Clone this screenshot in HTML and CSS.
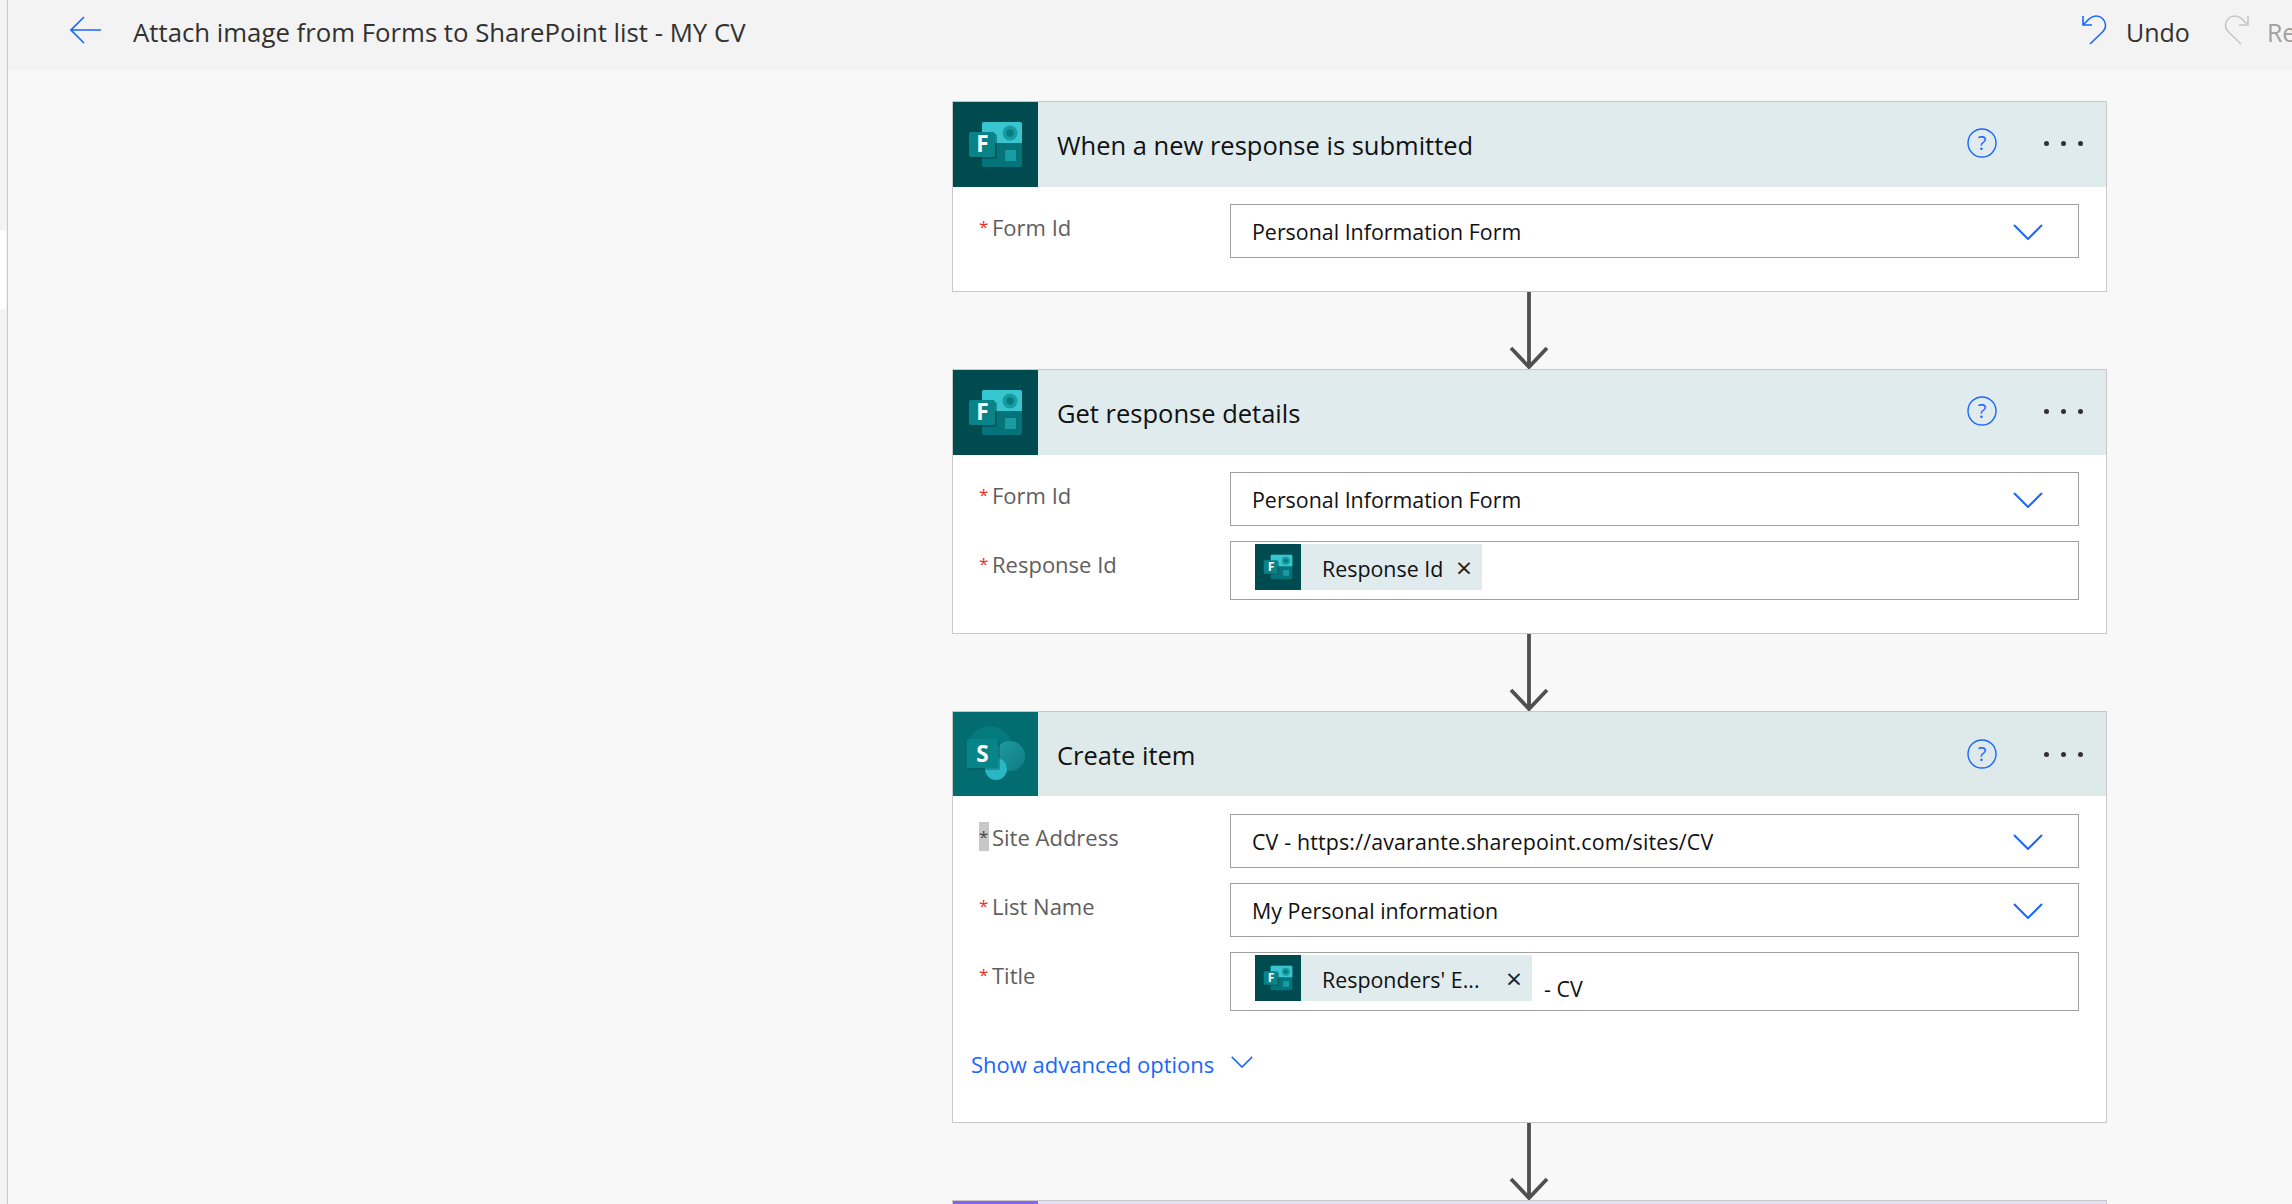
FILE: index.html
```html
<!DOCTYPE html>
<html lang="en">
<head>
<meta charset="utf-8">
<title>Attach image from Forms to SharePoint list - MY CV</title>
<link rel="stylesheet" href="styles.css">
</head>
<body>
<svg class="defs" width="0" height="0" aria-hidden="true">
  <defs>
    <linearGradient id="sp-right" x1="0" y1="0" x2="1" y2="1">
      <stop offset="0" stop-color="#1f9ca2"/>
      <stop offset="1" stop-color="#0f7b81"/>
    </linearGradient>
    <symbol id="forms" viewBox="0 0 85 85">
      <rect x="29" y="20" width="40" height="45" rx="2" fill="#05747a"/>
      <path d="M31 20H67a2 2 0 0 1 2 2V41H29V22a2 2 0 0 1 2-2z" fill="#37c6d0"/>
      <circle cx="57" cy="31" r="7.5" fill="#1a9ba1"/>
      <circle cx="57" cy="31" r="3.7" fill="#037c80"/>
      <rect x="52" y="48" width="11" height="11" fill="#1a9ba1"/>
      <rect x="18" y="32" width="26" height="25" rx="2" fill="#003f44" opacity="0.45"/>
      <rect x="16" y="30" width="26" height="25" rx="2" fill="#088387"/>
      <text x="29.5" y="50" text-anchor="middle" class="logo-letter">F</text>
    </symbol>
    <symbol id="sharepoint" viewBox="0 0 85 84">
      <circle cx="37" cy="36" r="22" fill="#047a7e"/>
      <circle cx="57" cy="44" r="15" fill="url(#sp-right)"/>
      <circle cx="43" cy="57" r="11" fill="#2ab7c3"/>
      <rect x="16" y="29" width="31" height="29" rx="2" fill="#024d50" opacity="0.4"/>
      <rect x="14" y="27" width="31" height="29" rx="2" fill="#068488"/>
      <text x="29.5" y="50" text-anchor="middle" class="logo-letter">S</text>
    </symbol>
    <symbol id="chev" viewBox="0 0 30 16">
      <path d="M1 1L15 15L29 1" fill="none" stroke="currentColor" stroke-width="2"/>
    </symbol>
    <symbol id="help" viewBox="0 0 30 30">
      <circle cx="15" cy="15" r="14" fill="none" stroke="currentColor" stroke-width="1.4"/>
      <text x="15" y="22" text-anchor="middle" class="help-mark">?</text>
    </symbol>
    <symbol id="arrow" viewBox="0 0 40 77">
      <path d="M20 0V75M2 56L20 75L38 56" fill="none" stroke="#505050" stroke-width="3.8"/>
    </symbol>
    <symbol id="undo" viewBox="0 0 26 30">
      <path d="M1 1V10H10M1.5 9.5L7 4C11 0 17 0 20.5 3.5C24.5 7.5 24.5 13 21 16.5L8 29" fill="none" stroke="currentColor" stroke-width="1.6"/>
    </symbol>
  </defs>
</svg>

<div class="rail"><div class="rail-tab"></div></div>

<div class="main">
  <header class="topbar">
    <svg class="back" viewBox="0 0 31 28"><path d="M14 1L1 14L14 27M1 14H31" fill="none" stroke="currentColor" stroke-width="1.6"/></svg>
    <h1 class="flow-title">Attach image from Forms to SharePoint list - MY CV</h1>
    <div class="actions">
      <button class="action"><svg class="action-icon"><use href="#undo"/></svg><span class="action-text">Undo</span></button>
      <button class="action action-off"><svg class="action-icon flip"><use href="#undo"/></svg><span class="action-text">Redo</span></button>
    </div>
  </header>

  <main class="canvas">
    <section class="card">
      <div class="card-head">
        <div class="logo logo-forms"><svg class="logo-svg"><use href="#forms"/></svg></div>
        <h2 class="card-title">When a new response is submitted</h2>
        <svg class="help"><use href="#help"/></svg>
        <div class="dots"><i></i><i></i><i></i></div>
      </div>
      <div class="card-body">
        <div class="field">
          <label class="label"><span class="star">*</span>Form Id</label>
          <div class="input"><span>Personal Information Form</span><svg class="chev"><use href="#chev"/></svg></div>
        </div>
      </div>
    </section>

    <svg class="connector"><use href="#arrow"/></svg>

    <section class="card">
      <div class="card-head">
        <div class="logo logo-forms"><svg class="logo-svg"><use href="#forms"/></svg></div>
        <h2 class="card-title">Get response details</h2>
        <svg class="help"><use href="#help"/></svg>
        <div class="dots"><i></i><i></i><i></i></div>
      </div>
      <div class="card-body">
        <div class="field">
          <label class="label"><span class="star">*</span>Form Id</label>
          <div class="input"><span>Personal Information Form</span><svg class="chev"><use href="#chev"/></svg></div>
        </div>
        <div class="field">
          <label class="label"><span class="star">*</span>Response Id</label>
          <div class="input input-tokens">
            <div class="token">
              <div class="token-logo"><svg class="token-svg"><use href="#forms"/></svg></div>
              <span class="token-text">Response Id</span>
              <span class="token-x">×</span>
            </div>
          </div>
        </div>
      </div>
    </section>

    <svg class="connector"><use href="#arrow"/></svg>

    <section class="card card-sp">
      <div class="card-head card-head-sp">
        <div class="logo logo-sp"><svg class="logo-svg"><use href="#sharepoint"/></svg></div>
        <h2 class="card-title">Create item</h2>
        <svg class="help"><use href="#help"/></svg>
        <div class="dots"><i></i><i></i><i></i></div>
      </div>
      <div class="card-body card-body-sp">
        <div class="field">
          <label class="label"><span class="star star-selected">*</span>Site Address</label>
          <div class="input"><span class="url">CV - https://avarante.sharepoint.com/sites/CV</span><svg class="chev"><use href="#chev"/></svg></div>
        </div>
        <div class="field">
          <label class="label"><span class="star">*</span>List Name</label>
          <div class="input"><span>My Personal information</span><svg class="chev"><use href="#chev"/></svg></div>
        </div>
        <div class="field">
          <label class="label"><span class="star">*</span>Title</label>
          <div class="input input-tokens">
            <div class="token token-wide">
              <div class="token-logo"><svg class="token-svg"><use href="#forms"/></svg></div>
              <span class="token-text">Responders' E...</span>
              <span class="token-x">×</span>
            </div>
            <span class="token-after">- CV</span>
          </div>
        </div>
        <div class="advanced">
          <a class="advanced-link">Show advanced options</a>
          <svg class="advanced-chev"><use href="#chev"/></svg>
        </div>
      </div>
    </section>

    <svg class="connector"><use href="#arrow"/></svg>

    <section class="card card-next">
      <div class="next-logo"></div>
    </section>
  </main>
</div>
</body>
</html>
```

FILE: styles.css
```css
* { box-sizing: border-box; }
html, body { height: 100%; }
body {
  margin: 0;
  display: flex;
  overflow: hidden;
  background: #f8f8f8;
  color: #201f1e;
  font-family: "Open Sans", "Noto Sans", sans-serif;
}
.defs { position: absolute; }
.logo-letter { font: 700 22.5px "Open Sans", sans-serif; fill: #fff; }
.help-mark { font: 400 20px "Open Sans", sans-serif; fill: currentColor; }

.rail {
  flex: 0 0 8px;
  height: 100%;
  background: #f3f3f3;
  border-right: 1px solid #c8c8c8;
  padding-top: 230px;
}
.rail-tab { width: 6px; height: 79px; background: #fff; border-radius: 0 3px 3px 0; }

.main { flex: 1; min-width: 0; display: flex; flex-direction: column; }

.topbar {
  flex: 0 0 70px;
  display: flex;
  align-items: center;
  background: #f3f3f3;
  padding-left: 62px;
}
.back { width: 31px; height: 28px; color: #1a66ff; flex: none; margin-top: -10px; }
.flow-title {
  margin: -6px 0 0 32px;
  font-size: 25.75px;
  font-weight: 400;
  color: #323130;
  white-space: nowrap;
}
.actions {
  margin-left: auto;
  width: 210px;
  flex: none;
  align-self: stretch;
  display: flex;
  overflow: hidden;
  gap: 33px;
  padding-bottom: 10px;
}
.action {
  display: flex;
  align-items: center;
  gap: 18px;
  flex: none;
  border: 0;
  padding: 0;
  background: none;
  color: #323130;
  font: 400 25px "Open Sans", sans-serif;
}
.action-text { padding-top: 4px; }
.action-icon { width: 26px; height: 30px; color: #1a66ff; }
.action-off { color: #a19f9d; }
.action-off .action-icon { color: #c8c6c4; }
.flip { transform: scaleX(-1); }

.canvas {
  flex: 1;
  min-height: 0;
  display: flex;
  flex-direction: column;
  align-items: flex-start;
  padding: 31px 0 0 944px;
}
.card {
  flex: none;
  width: 1155px;
  background: #fff;
  border: 1px solid #c8c8c8;
}
.card-head {
  height: 85px;
  display: flex;
  align-items: center;
  background: #e0ebee;
}
.card-head-sp { height: 84px; background: #deeaea; }
.logo { flex: 0 0 85px; height: 100%; }
.logo-forms { background: #004b50; }
.logo-sp { background: #036c70; }
.logo-svg { display: block; width: 85px; height: 100%; }
.card-title {
  flex: 1;
  margin: 0 0 0 19px;
  font-size: 25.5px;
  font-weight: 400;
  color: #111;
}
.card-head-sp .card-title { padding-top: 2px; }
.help { width: 30px; height: 30px; color: #1a66ff; margin-top: -3px; flex: none; }
.dots { display: flex; gap: 12px; margin: -2px 23px 0 47px; flex: none; }
.card-head-sp .dots { margin-top: 0; }
.card-head-sp .help { margin-top: -1px; }
.dots i { width: 5px; height: 5px; border-radius: 50%; background: #323130; }

.card-body { padding: 17px 27px 33px 0; display: flex; flex-direction: column; gap: 15px; }
.card-body-sp { padding-top: 18px; padding-bottom: 0; }
.field { display: grid; grid-template-columns: 277px 849px; }
.label { padding: 8px 0 0 26px; font-size: 22px; line-height: 30px; color: #605e5c; }
.star { display: inline-block; width: 13px; height: 29px; line-height: 29px; color: #e8301c; font-size: 17px; vertical-align: top; }
.star-selected { color: #444; background: #c8c8c8; width: 10px; margin-right: 3px; }
.input {
  height: 54px;
  border: 1px solid #a0a0a0;
  background: #fff;
  display: flex;
  align-items: center;
  justify-content: space-between;
  padding: 0 35px 0 21px;
  font-size: 21.4px;
  color: #111;
}
.url { letter-spacing: 0.15px; }
.chev { width: 30px; height: 16px; color: #1a66ff; flex: none; margin-top: 1px; }
.input-tokens { height: 59px; justify-content: flex-start; align-items: flex-start; padding: 2px 0 0 24px; }
.token { display: flex; align-items: center; height: 46px; background: #e0ebee; width: 227px; }
.token-wide { width: 277px; }
.token-logo { flex: 0 0 46px; height: 46px; background: #004b50; }
.token-svg { display: block; width: 46px; height: 46px; }
.token-text { margin-left: 21px; flex: 1; white-space: nowrap; padding-top: 2px; }
.token-x { font-size: 28px; line-height: 1; margin-right: 10px; color: #222; }
.token-after { margin: 19px 0 0 12px; }

.advanced { display: flex; align-items: center; height: 96px; padding: 0 0 20px 18px; color: #1a66ff; font-size: 22px; }
.advanced-link { color: #1a66ff; }
.advanced-chev { width: 22px; height: 12px; margin: -4px 0 0 17px; }

.connector { display: block; flex: none; width: 40px; height: 77px; margin-left: 557px; }

.card-next {
  flex: 1;
  min-height: 0;
  border-bottom: 0;
  background: #e5e0fb;
}
.next-logo { width: 85px; height: 100%; background: #8661f5; }
```
